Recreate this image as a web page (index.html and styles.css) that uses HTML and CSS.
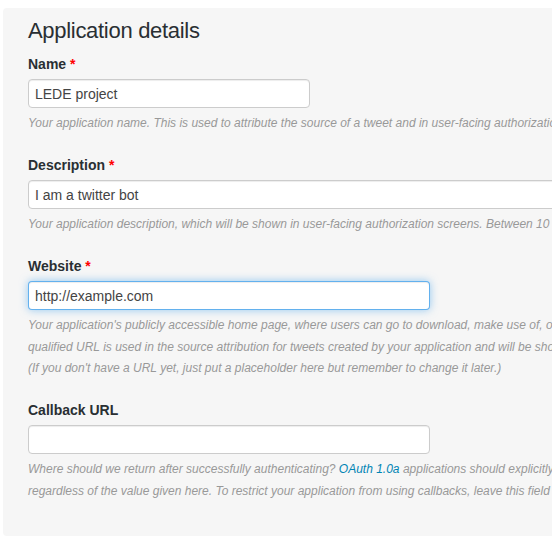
FILE: index.html
```html
<!DOCTYPE html>
<html>
<head>
<meta charset="utf-8">
<link rel="stylesheet" href="styles.css">
</head>
<body>
<div class="panel">
  <h2 class="title">Application details</h2>

  <div class="field">
    <label class="label">Name <span class="req">*</span></label>
    <input class="input input-name" type="text" value="LEDE project">
    <p class="help">Your application name. This is used to attribute the source of a tweet and in user-facing authorization screens. 32 characters max.</p>
  </div>

  <div class="field">
    <label class="label">Description <span class="req">*</span></label>
    <input class="input input-wide" type="text" value="I am a twitter bot">
    <p class="help">Your application description, which will be shown in user-facing authorization screens. Between 10 and 200 characters max.</p>
  </div>

  <div class="field">
    <label class="label">Website <span class="req">*</span></label>
    <input class="input input-mid focus" type="text" value="http://example.com">
    <p class="help">Your application's publicly accessible home page, where users can go to download, make use of, or find out more information about your application. This fully-<br>qualified URL is used in the source attribution for tweets created by your application and will be shown in user-facing authorization screens.<br>(If you don't have a URL yet, just put a placeholder here but remember to change it later.)</p>
  </div>

  <div class="field">
    <label class="label">Callback URL</label>
    <input class="input input-mid" type="text" value="">
    <p class="help">Where should we return after successfully authenticating? <a class="link" href="#">OAuth 1.0a</a> applications should explicitly specify their oauth_callback URL on the request token step,<br>regardless of the value given here. To restrict your application from using callbacks, leave this field blank.</p>
  </div>
</div>
</body>
</html>
```

FILE: styles.css
```css
html, body {
  margin: 0;
  padding: 0;
  background: #ffffff;
  overflow: hidden;
}

body {
  font-family: "Liberation Sans", Arial, sans-serif;
  color: #333333;
  padding: 8px 0 0 3px;
}

.panel {
  width: 1100px;
  background: #f6f6f6;
  border-radius: 4px;
  padding: 8px 0 13px 25px;
  display: flex;
  flex-direction: column;
  align-items: flex-start;
}

.title {
  margin: 0 0 8px 0;
  font-size: 22px;
  letter-spacing: -0.3px;
  line-height: 30px;
  font-weight: normal;
  color: #292f33;
}

.field {
  display: flex;
  flex-direction: column;
  align-items: flex-start;
  margin-bottom: 20.5px;
}

.label {
  font-size: 14px;
  line-height: 20px;
  font-weight: bold;
  color: #292f33;
  margin-bottom: 5px;
}

.req {
  color: #ff0000;
}

.input {
  box-sizing: border-box;
  height: 29px;
  margin: 0;
  padding: 0 6px;
  font-family: "Liberation Sans", Arial, sans-serif;
  font-size: 14px;
  color: #444444;
  background: #ffffff;
  border: 1px solid #cccccc;
  border-radius: 4px;
  box-shadow: inset 0 1px 1px rgba(0, 0, 0, 0.075);
  outline: none;
}

.input-name { width: 282px; }
.input-wide { width: 700px; }
.input-mid { width: 402px; }

.focus {
  border-color: rgba(82, 168, 236, 0.9);
  box-shadow: inset 0 1px 1px rgba(0, 0, 0, 0.075), 0 0 8px rgba(82, 168, 236, 0.6);
}

.help {
  margin: 5px 0 0 0;
  font-size: 12px;
  line-height: 21.5px;
  font-style: italic;
  color: #999999;
  white-space: nowrap;
}

.link {
  color: #0084b4;
  text-decoration: none;
}
```
